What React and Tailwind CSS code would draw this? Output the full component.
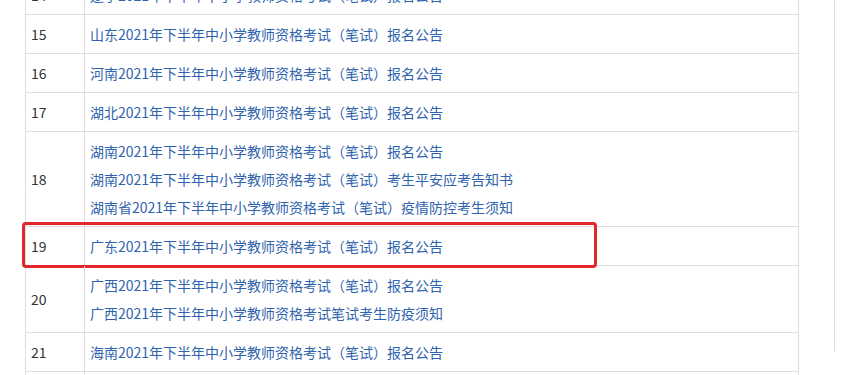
import React from "react";

const rows = [
  { no: 14, links: ["辽宁2021年下半年中小学教师资格考试（笔试）报名公告"] },
  { no: 15, links: ["山东2021年下半年中小学教师资格考试（笔试）报名公告"] },
  { no: 16, links: ["河南2021年下半年中小学教师资格考试（笔试）报名公告"] },
  { no: 17, links: ["湖北2021年下半年中小学教师资格考试（笔试）报名公告"] },
  {
    no: 18,
    links: [
      "湖南2021年下半年中小学教师资格考试（笔试）报名公告",
      "湖南2021年下半年中小学教师资格考试（笔试）考生平安应考告知书",
      "湖南省2021年下半年中小学教师资格考试（笔试）疫情防控考生须知",
    ],
  },
  { no: 19, links: ["广东2021年下半年中小学教师资格考试（笔试）报名公告"], marked: true },
  {
    no: 20,
    links: [
      "广西2021年下半年中小学教师资格考试（笔试）报名公告",
      "广西2021年下半年中小学教师资格考试笔试考生防疫须知",
    ],
  },
  { no: 21, links: ["海南2021年下半年中小学教师资格考试（笔试）报名公告"] },
  { no: 22, links: ["重庆2021年下半年中小学教师资格考试（笔试）报名公告"] },
];

const App = () => {
  return (
    <div
      className="h-screen overflow-hidden bg-white"
      style={{ fontFamily: '"Noto Sans CJK SC", "Noto Sans", sans-serif' }}
    >
      <div className="w-[835px] h-full border-r border-[#dddddd]">
        <div className="ml-[25px] mt-[-24px] w-[774px] border-l border-r border-[#dddddd] text-[14px]">
          {rows.map((row) => (
            <div key={row.no} className="relative flex border-b border-[#dddddd]">
              <div className="w-[59px] shrink-0 border-r border-[#dddddd] px-[5px] flex items-center text-[#333333]">
                {row.no}
              </div>
              <div className="flex-1 flex flex-col py-[5px] px-[5px] leading-[28px]">
                {row.links.map((t) => (
                  <a key={t} href="#" className="text-[#2f63ad] whitespace-nowrap">
                    {t}
                  </a>
                ))}
              </div>
              {row.marked && (
                <div className="absolute left-[-4px] top-[-5px] w-[575px] h-[46px] border-[3px] border-[#e3262b] rounded-[4px] pointer-events-none" />
              )}
            </div>
          ))}
        </div>
      </div>
    </div>
  );
};

export default App;
